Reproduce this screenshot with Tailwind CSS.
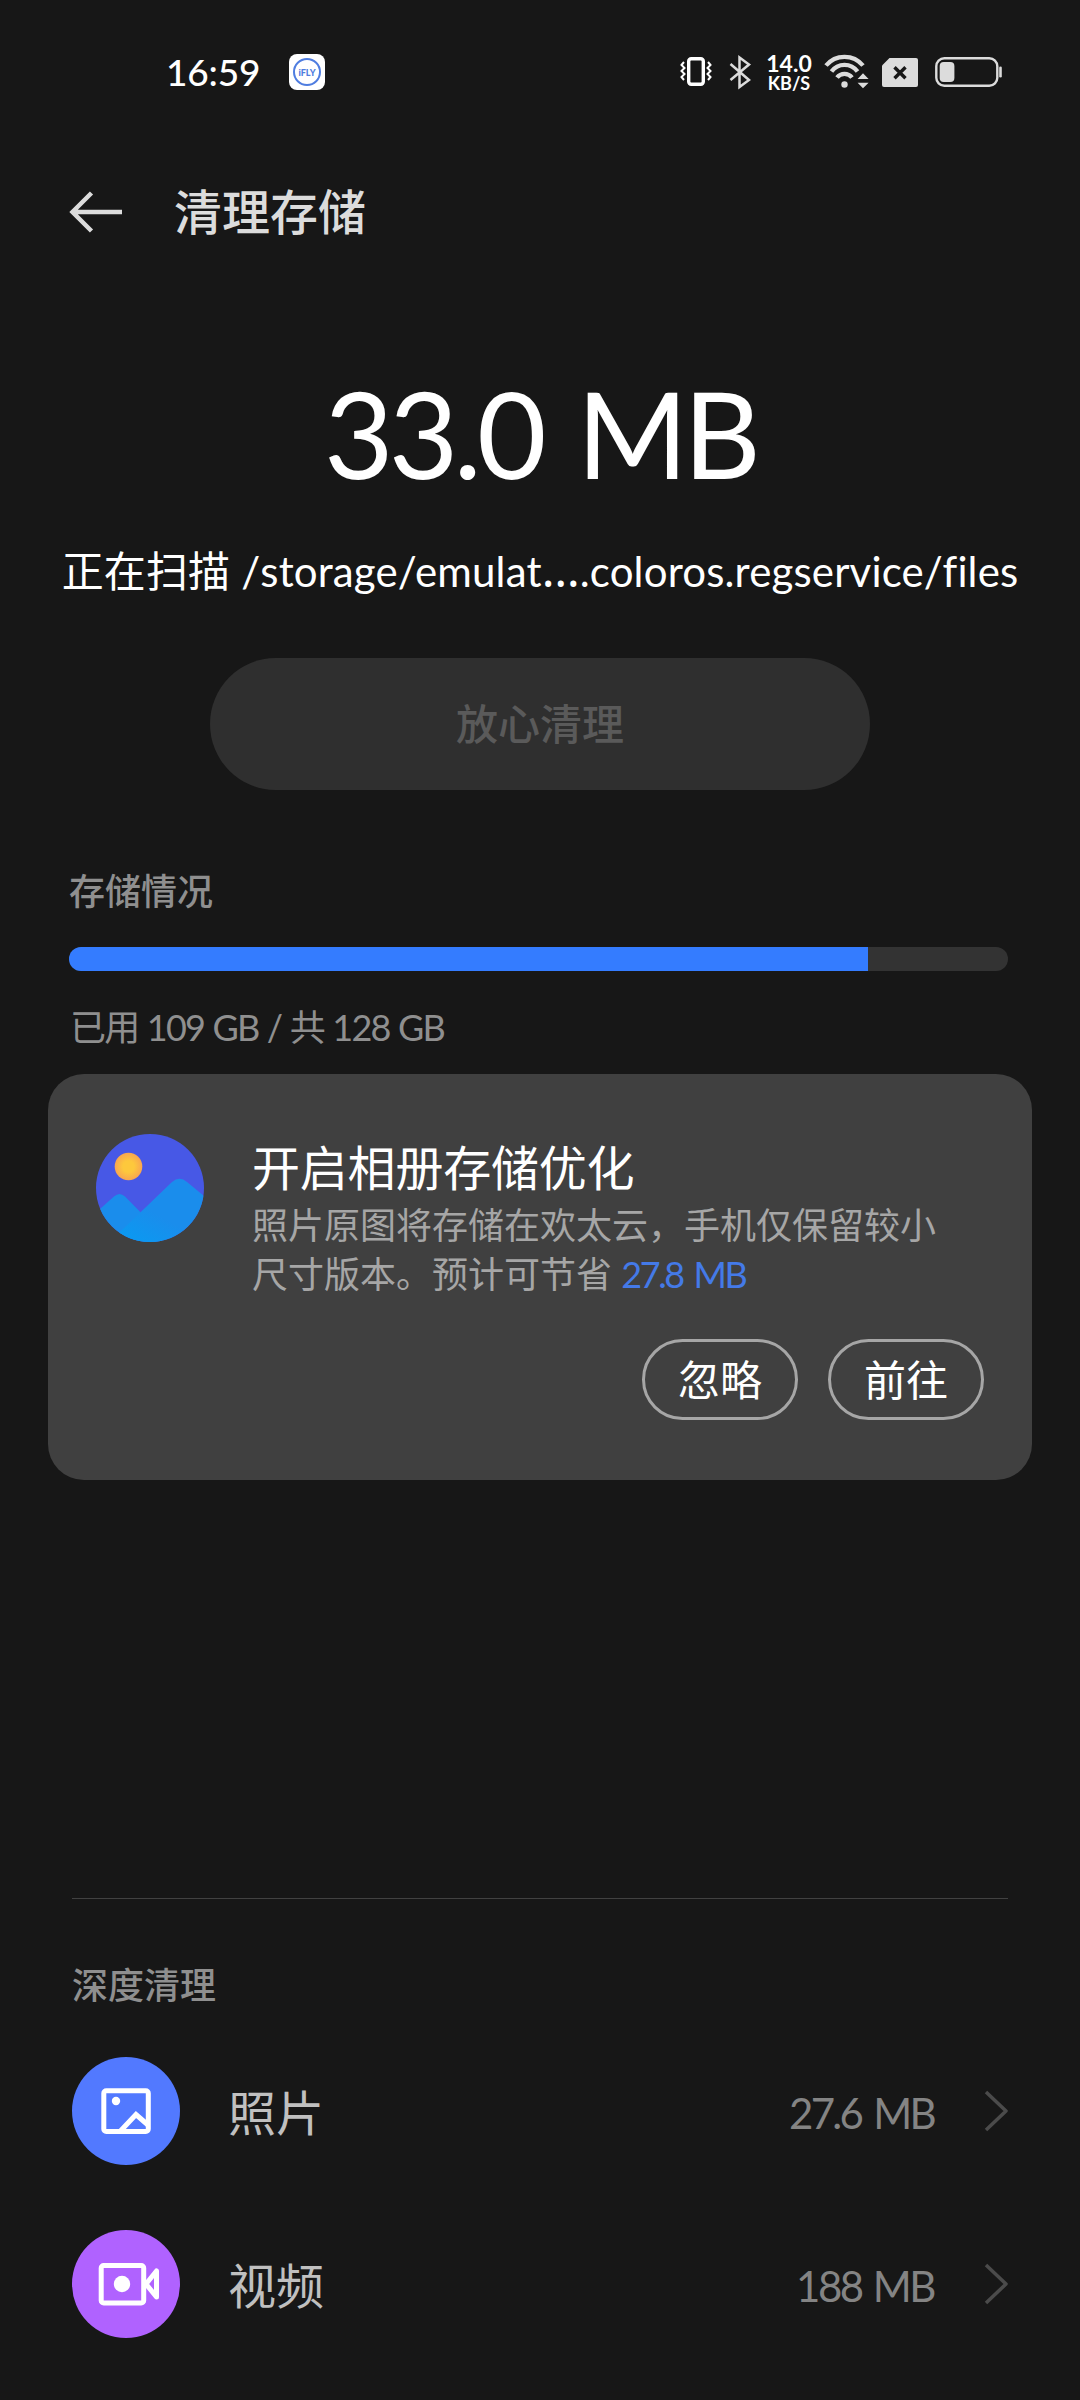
<!DOCTYPE html>
<html lang="zh-CN">
<head>
    <meta charset="UTF-8">
    <meta name="viewport" content="width=device-width, initial-scale=1.0">
    <title>清理存储</title>
    <script src="https://cdn.jsdelivr.net/npm/@tailwindcss/browser@4"></script>
    <style>
        body { font-family: 'Lato', 'Noto Sans CJK SC', sans-serif; font-variant-ligatures: none; }
    </style>
</head>
<body class="bg-[#171717] text-white">
<div class="w-[1080px] h-[2400px] flex flex-col overflow-hidden whitespace-nowrap">

    <!-- 状态栏 -->
    <div class="h-[144px] flex items-center pl-[166px] pr-[77px]">
        <span class="w-[123px] text-[37px] leading-[40px] font-medium tracking-[-0.2px]">16:59</span>
        <div class="size-9 rounded-lg bg-white flex items-center justify-center">
            <div class="size-7 rounded-full border-2 border-[#4f7de0] flex items-center justify-center text-[9px] leading-none font-black text-[#4f7de0]">iFLY</div>
        </div>
        <div class="ml-auto flex items-center">
            <svg class="w-8 h-9" viewBox="0 0 32 36" fill="none" stroke="#fff">
                <rect x="8.7" y="4.7" width="14.6" height="25.6" rx="2.5" stroke-width="3.4"/>
                <path d="M4 8l-2.500 3 3 3-3 3 3 3-3 3 2.500 3M28 8l2.500 3-3 3 3 3-3 3 3 3-2.500 3" stroke-width="2"/>
            </svg>
            <svg class="ml-[17px] w-6 h-9" viewBox="0 0 24 36" fill="none" stroke="#dcdcdc" stroke-width="2.500">
                <path d="M1.500 10L20 26l-9.500 7V3.500L20 10.500 1.500 26"/>
            </svg>
            <div class="ml-3 mr-px w-[48px] flex flex-col items-center font-bold">
                <span class="text-[23px] leading-[22px]">14.0</span>
                <span class="text-[18px] leading-[18px]">KB/S</span>
            </div>
            <svg class="ml-[9px] w-[47px] h-9" viewBox="0 0 47 36" fill="none" stroke="#dcdcdc" stroke-width="4.300">
                <path d="M3 11.500A24 24 0 0 1 40 11.500M8.500 17.500A16 16 0 0 1 34.500 17.500M14 23.500A9.500 9.500 0 0 1 29 23.500"/>
                <circle cx="21.500" cy="30.500" r="3.200" fill="#dcdcdc" stroke="none"/>
                <path d="M34.600 25L40 19.300 45.600 25zM34.600 28.700H45.600L40 34.300z" fill="#dcdcdc" stroke="none"/>
            </svg>
            <svg class="ml-3 w-9 h-[29px]" viewBox="0 0 36 29">
                <path d="M7.500 0H34a2 2 0 0 1 2 2V27a2 2 0 0 1-2 2H2a2 2 0 0 1-2-2V7.500z" fill="#dcdcdc"/>
                <path d="M12.500 9.200l11 11M23.500 9.200l-11 11" stroke="#171717" stroke-width="3.400"/>
            </svg>
            <svg class="ml-[17px] w-[68px] h-[30px]" viewBox="0 0 68 30">
                <rect x="1.300" y="1.300" width="61" height="27.400" rx="8" fill="none" stroke="#dcdcdc" stroke-width="2.400"/>
                <rect x="4.700" y="5" width="14.700" height="20" rx="4" fill="#dcdcdc"/>
                <rect x="64.200" y="9.500" width="2.600" height="11" rx="1.300" fill="#dcdcdc"/>
            </svg>
        </div>
    </div>

    <!-- 标题栏 -->
    <div class="h-[136px] flex items-center pl-[69px]">
        <svg class="w-[54px] h-11" viewBox="0 0 54 44" fill="none" stroke="#dcdcdc" stroke-width="4.500">
            <path d="M53 22H4M22.500 3L3.500 22l19 19"/>
        </svg>
        <h1 class="ml-[51px] text-[48px] leading-[64px] font-medium text-[#dcdcdc]">清理存储</h1>
    </div>

    <!-- 扫描结果 -->
    <div class="h-[378px] pt-[73px] flex flex-col items-center">
        <div class="text-[120px] leading-[160px] tracking-[-4.8px] [word-spacing:9px]">33.0 MB</div>
        <div class="mt-[30px] text-[42px] leading-[56px] tracking-[0.15px]">正在扫描 /storage/emulat<span class="font-['Noto_Sans'] text-[48px] leading-none">…</span>.coloros.regservice/files</div>
    </div>
    <button class="mx-auto w-[660px] h-[132px] rounded-full bg-[#2f2f2f] text-[42px] font-medium text-[#5a5a5a]">放心清理</button>

    <!-- 存储情况 -->
    <div class="h-[284px] pt-[76px] px-[69px] text-[#8f8f8f]">
        <h2 class="text-[36px] leading-[50px] font-medium">存储情况</h2>
        <div class="mt-[31px] w-[939px] h-6 rounded-full bg-[#333333] overflow-hidden">
            <div class="h-full bg-[#347cff]" style="width: 85.1%"></div>
        </div>
        <p class="mt-[31px] pl-[1px] text-[36px] leading-[50px] tracking-[-1.8px] [word-spacing:1px]">已用 109 GB / 共 128 GB</p>
    </div>

    <!-- 相册优化卡片 -->
    <div class="mx-12 h-[406px] rounded-[36px] bg-[#404040] px-12 pt-[60px]">
        <div class="flex">
            <svg class="size-[108px] shrink-0" viewBox="0 0 108 108">
                <defs>
                    <clipPath id="disc"><circle cx="54" cy="54" r="54"/></clipPath>
                    <linearGradient id="hill" x1="0" y1="1" x2="0.700" y2="0.200">
                        <stop offset="0" stop-color="#069df2"/>
                        <stop offset="0.600" stop-color="#1a8dec"/>
                    </linearGradient>
                    <radialGradient id="sun">
                        <stop offset="0.400" stop-color="#fdc83c"/>
                        <stop offset="1" stop-color="#f8a650"/>
                    </radialGradient>
                </defs>
                <g clip-path="url(#disc)">
                    <rect width="108" height="108" fill="#4758e6"/>
                    <circle cx="32.500" cy="32.500" r="13.800" fill="url(#sun)"/>
                    <path d="M-4 82L18 62.500Q23.500 57.500 29 62.500L66 100V108H-4z" fill="#1a8dec"/>
                    <path d="M24 98L76 48Q83.500 41.500 91 48L114 67V108H14z" fill="url(#hill)"/>
                </g>
            </svg>
            <div class="ml-12">
                <h3 class="text-[48px] leading-[64px] pt-[2px] mb-px tracking-[-0.2px]">开启相册存储优化</h3>
                <p class="text-[36px] leading-[49px] text-[#a6a6a6]">照片原图将存储在欢太云，手机仅保留较小<br>尺寸版本。预计可节省 <span class="text-[#447ae8] tracking-[-2.4px] [word-spacing:4px]">27.8 MB</span></p>
            </div>
        </div>
        <div class="mt-10 flex justify-end gap-[30px] text-[42px]">
            <button class="w-[156px] h-[81px] rounded-full border-3 border-[#a6a6a6] leading-none">忽略</button>
            <button class="w-[156px] h-[81px] rounded-full border-3 border-[#a6a6a6] leading-none">前往</button>
        </div>
    </div>

    <!-- 深度清理 -->
    <div class="mt-[418px] mx-[72px] border-t border-[#414141]">
        <h2 class="pt-[61px] text-[36px] leading-[50px] font-medium text-[#8f8f8f]">深度清理</h2>
        <div class="mt-[14px] h-[173px] flex items-center">
            <svg class="size-[108px]" viewBox="0 0 108 108" fill="none" stroke="#fff" stroke-width="5">
                <circle cx="54" cy="54" r="54" fill="#5279ff" stroke="none"/>
                <rect x="31.800" y="33.800" width="44.500" height="40.700" rx="2.500"/>
                <circle cx="44" cy="44" r="4.200" fill="#fff" stroke="none"/>
                <path d="M48 74.500L64 57.500 76 68"/>
            </svg>
            <span class="ml-12 pt-1 text-[48px] leading-[64px] text-[#c0c0c0]">照片</span>
            <span class="ml-auto pt-1 text-[42px] leading-[56px] tracking-[-2.7px] [word-spacing:4px] text-[#848484]">27.6 MB</span>
            <svg class="ml-[50px] w-6 h-[42px]" viewBox="0 0 24 42" fill="none" stroke="#4b4b4b" stroke-width="3.500">
                <path d="M2 2l20 19L2 40" stroke-linejoin="round"/>
            </svg>
        </div>
        <div class="h-[173px] flex items-center">
            <svg class="size-[108px]" viewBox="0 0 108 108" fill="none" stroke="#fff" stroke-width="5">
                <circle cx="54" cy="54" r="54" fill="#b062ff" stroke="none"/>
                <rect x="29.200" y="35.500" width="42.500" height="37.500" rx="2.500"/>
                <circle cx="50" cy="54" r="8.200" fill="#fff" stroke="none"/>
                <path d="M74 54L84.500 41V67z" stroke-linejoin="round"/>
            </svg>
            <span class="ml-12 pt-1 text-[48px] leading-[64px] text-[#c0c0c0]">视频</span>
            <span class="ml-auto pt-1 text-[42px] leading-[56px] tracking-[-2.5px] [word-spacing:3px] text-[#848484]">188 MB</span>
            <svg class="ml-[50px] w-6 h-[42px]" viewBox="0 0 24 42" fill="none" stroke="#4b4b4b" stroke-width="3.500">
                <path d="M2 2l20 19L2 40" stroke-linejoin="round"/>
            </svg>
        </div>
    </div>
</div>
</body>
</html>
